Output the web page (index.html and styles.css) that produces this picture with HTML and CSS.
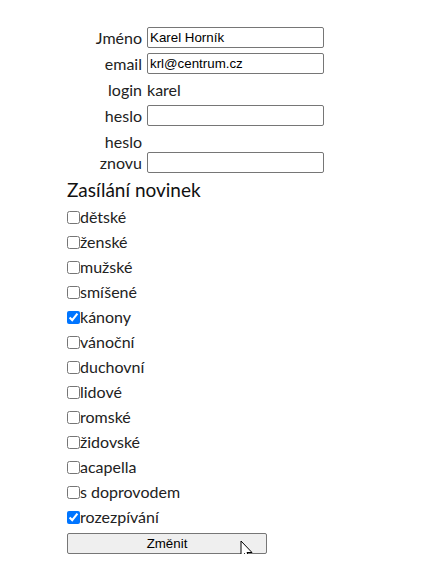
FILE: index.html
```html
<!DOCTYPE html>
<html>
	<head>
		<meta charset="utf-8">
		<title>Nastavení</title>
		<link rel="stylesheet" href="styles.css">
	</head>
	<body>
		<form class="profil">
			<div class="row">
				<label class="lbl">Jméno</label>
				<input class="txt" type="text" value="Karel Horník">
			</div>
			<div class="row">
				<label class="lbl">email</label>
				<input class="txt" type="text" value="krl@centrum.cz">
			</div>
			<div class="row">
				<label class="lbl">login</label>
				<span class="val">karel</span>
			</div>
			<div class="row">
				<label class="lbl">heslo</label>
				<input class="txt" type="password">
			</div>
			<div class="row">
				<label class="lbl">heslo znovu</label>
				<input class="txt" type="password">
			</div>
			<h3 class="nadpis">Zasílání novinek</h3>
			<ul class="novinky">
				<li><label><input type="checkbox">dětské</label></li>
				<li><label><input type="checkbox">ženské</label></li>
				<li><label><input type="checkbox">mužské</label></li>
				<li><label><input type="checkbox">smíšené</label></li>
				<li><label><input type="checkbox" checked>kánony</label></li>
				<li><label><input type="checkbox">vánoční</label></li>
				<li><label><input type="checkbox">duchovní</label></li>
				<li><label><input type="checkbox">lidové</label></li>
				<li><label><input type="checkbox">romské</label></li>
				<li><label><input type="checkbox">židovské</label></li>
				<li><label><input type="checkbox">acapella</label></li>
				<li><label><input type="checkbox">s doprovodem</label></li>
				<li><label><input type="checkbox" checked>rozezpívání</label></li>
			</ul>
			<div class="odeslat">
				<button class="btn" type="button">Změnit</button>
				<!-- kurzor mysi nad tlacitkem -->
				<svg class="kurzor" width="13" height="22" viewBox="0 0 13 22">
					<path d="M1 1 L1 17 L4.5 13.5 L7.5 20.5 L10 19.5 L7 12.5 L12 12.5 Z" fill="#fff" stroke="#000" stroke-width="1" stroke-linejoin="round"/>
				</svg>
			</div>
		</form>
	</body>
</html>
```

FILE: styles.css
```css
*{
	padding: 0;
	margin: 0;
	box-sizing: border-box;
}
body{
	background: #fff;
	color: #222;
	font-family: Lato, "Open Sans", sans-serif;
	font-size: 16px;
}
.profil{
	width: 444px;
	padding: 27px 0 0 67px;
}
.row{
	display: flex;
	align-items: flex-end;
	gap: 5px;
	margin-bottom: 5px;
}
.lbl{
	width: 75px;
	text-align: right;
	line-height: 21px;
}
.val{
	line-height: 21px;
}
.txt{
	width: 177px;
	height: 21px;
	padding: 1px 2px;
	border: 1px solid #767676;
	border-radius: 2px;
	font-family: Arial, "Liberation Sans", sans-serif;
	font-size: 13.33px;
	color: #000;
	background: #fff;
}
.nadpis{
	font-size: 19px;
	font-weight: normal;
	line-height: 24px;
	color: #111;
}
.novinky{
	list-style: none;
	margin-top: 2px;
}
.novinky li{
	height: 25px;
	line-height: 25px;
}
.novinky input{
	width: 13px;
	height: 13px;
	margin: 0;
	vertical-align: -1px;
	accent-color: #0075ff;
}
.odeslat{
	position: relative;
	margin-top: 3px;
	width: 200px;
}
.btn{
	width: 200px;
	height: 21px;
	border: 1px solid #767676;
	border-radius: 2px;
	background: #efefef;
	font-family: Arial, "Liberation Sans", sans-serif;
	font-size: 13.33px;
	color: #000;
}
.kurzor{
	position: absolute;
	left: 173px;
	top: 8px;
}
```
